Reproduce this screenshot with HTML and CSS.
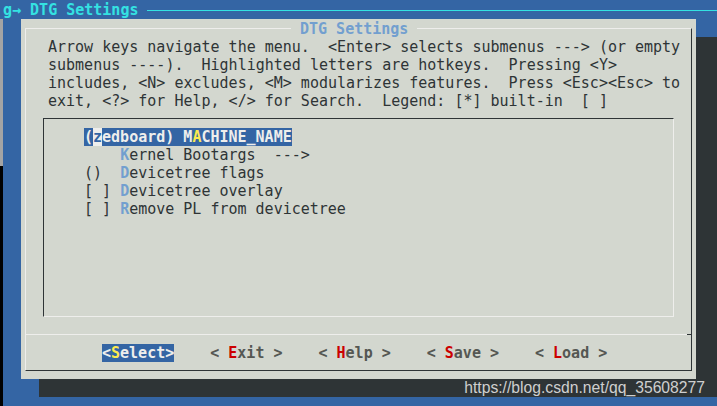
FILE: index.html
```html
<!DOCTYPE html>
<html lang="en">
<head>
  <meta charset="UTF-8">
  <meta name="viewport" content="width=device-width, initial-scale=1.0">
  <title>DTG Settings</title>
  <link rel="stylesheet" href="styles.css">
</head>
<body>
  <div class="edge">
    <div class="edge-top"></div>
    <div class="edge-gray"></div>
    <div class="edge-black"></div>
  </div>

  <div class="screen">
    <div class="backtitle">
      <span class="crumb">g→ DTG Settings</span>
      <span class="rule"></span>
    </div>

    <div class="dialog">
      <div class="frame">
        <div class="frame-title"><span>DTG Settings</span></div>

        <div class="help">
          <div class="line">Arrow keys navigate the menu.  &lt;Enter&gt; selects submenus ---&gt; (or empty</div>
          <div class="line">submenus ----).  Highlighted letters are hotkeys.  Pressing &lt;Y&gt;</div>
          <div class="line">includes, &lt;N&gt; excludes, &lt;M&gt; modularizes features.  Press &lt;Esc&gt;&lt;Esc&gt; to</div>
          <div class="line">exit, &lt;?&gt; for Help, &lt;/&gt; for Search.  Legend: [*] built-in  [ ]</div>
        </div>

        <div class="menu">
          <div class="item"><span class="current">(<span class="cursor">z</span>edboard) M<span class="hk-sel">A</span>CHINE_NAME</span></div>
          <div class="item">    <span class="hk">K</span>ernel Bootargs  ---&gt;</div>
          <div class="item">()  <span class="hk">D</span>evicetree flags</div>
          <div class="item">[ ] <span class="hk">D</span>evicetree overlay</div>
          <div class="item">[ ] <span class="hk">R</span>emove PL from devicetree</div>
        </div>

        <div class="divider"></div>

        <div class="buttons">
          <span class="btn btn-active">&lt;<span class="hk-sel">S</span>elect&gt;</span>
          <span class="btn">&lt; <span class="hk-btn">E</span>xit &gt;</span>
          <span class="btn">&lt; <span class="hk-btn">H</span>elp &gt;</span>
          <span class="btn">&lt; <span class="hk-btn">S</span>ave &gt;</span>
          <span class="btn">&lt; <span class="hk-btn">L</span>oad &gt;</span>
        </div>
      </div>
    </div>
  </div>

  <div class="watermark">https://blog.csdn.net/qq_35608277</div>
</body>
</html>
```

FILE: styles.css
```css
body {
  margin: 0;
  width: 717px;
  height: 406px;
  overflow: hidden;
  position: relative;
  display: flex;
  background-color: #3465a4;
  font-family: "DejaVu Sans Mono", monospace;
  font-size: 15px;
  line-height: 18px;
  color: #2e3436;
}

.edge {
  width: 3px;
  display: flex;
  flex-direction: column;
}

.edge-top {
  height: 19px;
}

.edge-gray {
  height: 147px;
  background-color: #a4a4a4;
}

.edge-black {
  flex: 1;
  background-color: #000;
}

.screen {
  flex: 1;
  padding-top: 1px;
}

.backtitle {
  height: 18px;
  display: flex;
  align-items: center;
  color: #34e2e2;
  font-weight: bold;
  white-space: pre;
}

.rule {
  flex: 1;
  height: 1px;
  margin-left: 9px;
  margin-top: 1px;
  background-color: #34e2e2;
}

.dialog {
  width: 675px;
  height: 360px;
  margin-left: 18px;
  background-color: #d3d7cf;
  box-shadow: 18px 18px 0 #2e3436, 21px 18px 0 #2e3436;
  padding-top: 9px;
  padding-left: 4px;
  box-sizing: border-box;
}

.frame {
  width: 667px;
  height: 343px;
  box-sizing: border-box;
  border-top: 1px solid #eeeeec;
  border-left: 1px solid #eeeeec;
  border-right: 1px solid #2e3436;
  border-bottom: 1px solid #2e3436;
}

.frame-title {
  height: 18px;
  margin-top: -10px;
  display: flex;
}

.frame-title span {
  margin-left: 265px;
  padding: 1px 9px 0;
  background-color: #d3d7cf;
  color: #729fcf;
  font-weight: bold;
}

.help {
  padding-top: 1px;
  padding-left: 22px;
}

.line,
.item {
  height: 18px;
  white-space: pre;
}

.menu {
  width: 631px;
  height: 199px;
  margin: 8px 0 0 17px;
  padding: 9px 0 0 40px;
  box-sizing: border-box;
  border-top: 1px solid #2e3436;
  border-left: 1px solid #2e3436;
  border-right: 1px solid #eeeeec;
  border-bottom: 1px solid #eeeeec;
}

.current {
  background-color: #3465a4;
  color: #eeeeec;
  font-weight: bold;
}

.cursor {
  background-color: #eeeeec;
  color: #3465a4;
}

.hk {
  color: #729fcf;
  font-weight: bold;
}

.hk-sel {
  color: #fce94f;
  font-weight: bold;
}

.divider {
  height: 1px;
  margin-top: 17px;
  background: linear-gradient(to right, #eeeeec calc(100% - 4px), #2e3436 0);
}

.buttons {
  height: 18px;
  margin-top: 9px;
  padding-left: 76px;
  display: flex;
  gap: 36px;
  white-space: pre;
}

.btn {
  color: #555753;
  font-weight: bold;
}

.btn-active {
  background-color: #3465a4;
  color: #eeeeec;
}

.hk-btn {
  color: #cc0000;
}

.watermark {
  position: absolute;
  right: 12px;
  bottom: 9px;
  line-height: 18px;
  font-family: "Liberation Sans", Arial, sans-serif;
  font-size: 15.7px;
  color: #cfcfcf;
}
```
